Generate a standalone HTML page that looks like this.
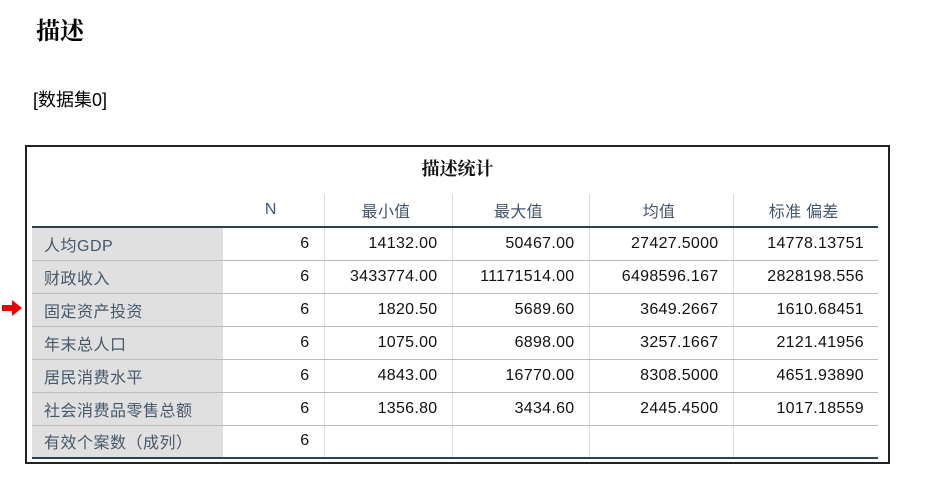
<!DOCTYPE html>
<html><head><meta charset="utf-8"><style>
body{margin:0;width:940px;height:482px;background:#fff;position:relative;overflow:hidden;font-family:"Liberation Sans","Noto Sans CJK SC",sans-serif;}
.abs{position:absolute}
.h1{left:36px;top:11px;font-family:"Noto Serif CJK SC",serif;font-weight:bold;font-size:24px;color:#000}
.ds{left:33px;top:86px;font-size:18px;color:#000}
.box{left:25px;top:145px;width:865px;height:319px;border:2px solid #222;box-sizing:border-box}
.title{left:25px;top:155px;width:865px;text-align:center;font-family:"Noto Serif CJK SC",serif;font-weight:bold;font-size:18px;color:#111}
table{position:absolute;left:32px;top:194px;border-collapse:collapse;font-size:16px;color:#111;letter-spacing:0.3px}
td{height:33px;padding:0 14px 0 10px;border-bottom:1px solid #bbb;border-left:1px solid #ddd;text-align:right;box-sizing:border-box}
tr.hd td{height:33px;border-bottom:2px solid #2c4152;text-align:center;color:#44566b;font-size:16px}
td.l{background:#e0e0e0;text-align:left;color:#45586b;border-left:none;padding-left:12px;letter-spacing:0.5px}
tr.last td{border-bottom:2px solid #2c4152}
tr.hd td.e{border-left:none}
</style></head><body>
<div class="abs h1">描述</div>
<div class="abs ds">[数据集0]</div>
<div class="abs box"></div>
<div class="abs title">描述统计</div>
<svg class="abs" style="left:1px;top:299px" width="22" height="18"><polygon points="1,6 11,6 11,1 21,9 11,17 11,12 1,12" fill="#e00"/></svg>
<table>
<colgroup><col style="width:190px"><col style="width:102px"><col style="width:128px"><col style="width:137px"><col style="width:144px"><col style="width:145px"></colgroup>
<tr class="hd"><td class="e"></td><td style="border-left:none">N</td><td>最小值</td><td>最大值</td><td>均值</td><td>标准 偏差</td></tr>
<tr><td class="l">人均GDP</td><td>6</td><td>14132.00</td><td>50467.00</td><td>27427.5000</td><td>14778.13751</td></tr>
<tr><td class="l">财政收入</td><td>6</td><td>3433774.00</td><td>11171514.00</td><td>6498596.167</td><td>2828198.556</td></tr>
<tr><td class="l">固定资产投资</td><td>6</td><td>1820.50</td><td>5689.60</td><td>3649.2667</td><td>1610.68451</td></tr>
<tr><td class="l">年末总人口</td><td>6</td><td>1075.00</td><td>6898.00</td><td>3257.1667</td><td>2121.41956</td></tr>
<tr><td class="l">居民消费水平</td><td>6</td><td>4843.00</td><td>16770.00</td><td>8308.5000</td><td>4651.93890</td></tr>
<tr><td class="l">社会消费品零售总额</td><td>6</td><td>1356.80</td><td>3434.60</td><td>2445.4500</td><td>1017.18559</td></tr>
<tr class="last"><td class="l">有效个案数（成列）</td><td>6</td><td></td><td></td><td></td><td></td></tr>
</table>
</body></html>
